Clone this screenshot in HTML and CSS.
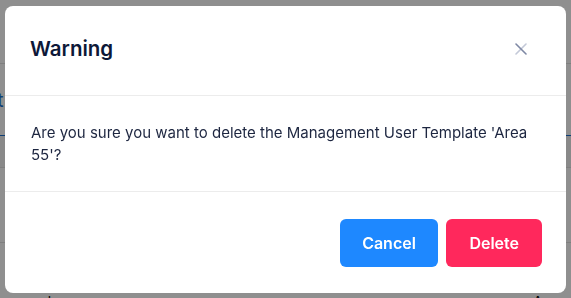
FILE: index.html
```html
<!DOCTYPE html>
<html lang="en">
<head>
<meta charset="utf-8">
<title>Warning</title>
<link rel="stylesheet" href="styles.css">
</head>
<body>
<div class="page">
  <div class="row row-top"></div>
  <div class="row row-link"><span class="link">t</span></div>
  <div class="row row-band"></div>
  <div class="row row-mid"></div>
  <div class="row row-bottom"><span class="peek peek-left">ab</span><span class="peek peek-right">Ac</span></div>
</div>
<div class="overlay">
  <div class="modal" role="dialog">
    <div class="modal-header">
      <h2 class="modal-title">Warning</h2>
      <button class="close" aria-label="Close">
        <svg width="12" height="12" viewBox="0 0 12 12">
          <line x1="1" y1="11" x2="11" y2="1" stroke="#c3c9d8" stroke-width="1.6" stroke-linecap="round"/>
          <line x1="1" y1="1" x2="11" y2="11" stroke="#7e88a4" stroke-width="1.6" stroke-linecap="round"/>
        </svg>
      </button>
    </div>
    <div class="modal-body">
      <p>Are you sure you want to delete the Management User Template 'Area 55'?</p>
    </div>
    <div class="modal-footer">
      <button class="btn btn-cancel">Cancel</button>
      <button class="btn btn-delete">Delete</button>
    </div>
  </div>
</div>
</body>
</html>
```

FILE: styles.css
```css
* { box-sizing: border-box; }
html, body { margin: 0; padding: 0; height: 100%; }
body {
  font-family: Inter, "Noto Sans", sans-serif;
  background: #ffffff;
  overflow: hidden;
}
.page {
  height: 298px;
  display: flex;
  flex-direction: column;
}
.row { border-bottom: 1px solid #e2e2e2; }
.row-top { height: 64px; }
.row-link { height: 72px; border-bottom: 1px solid #1a6fd0; position: relative; }
.link {
  position: absolute;
  left: -3px;
  top: 26px;
  color: #1a6fd0;
  font-size: 20px;
  line-height: 20px;
}
.row-band { height: 32px; background: #f4f4f4; }
.row-mid { height: 75px; }
.row-bottom { flex: 1; position: relative; border-bottom: none; }
.peek {
  position: absolute;
  top: 50px;
  font-size: 14px;
  color: #000;
}
.peek-left { left: 40px; }
.peek-right { left: 533px; }

.overlay {
  position: fixed;
  inset: 0;
  background: rgba(0, 0, 0, 0.44);
  display: flex;
  align-items: center;
  justify-content: center;
}
.modal {
  width: 561px;
  height: 287px;
  margin-top: 1px;
  background: #ffffff;
  border-radius: 8px;
  display: flex;
  flex-direction: column;
}
.modal-header {
  height: 90px;
  padding: 0 39px 0 26px;
  display: flex;
  align-items: center;
  justify-content: space-between;
  border-bottom: 1px solid #ececec;
}
.modal-title {
  margin: 0 0 3px -1px;
  font-size: 20.5px;
  font-weight: 600;
  color: #0d1838;
  line-height: 28px;
}
.close {
  border: 0;
  background: none;
  padding: 0;
  width: 12px;
  height: 12px;
  margin-bottom: 4px;
  display: flex;
}
.modal-body {
  padding: 26px 26px 0 26px;
  height: 96px;
  border-bottom: 1px solid #ececec;
}
.modal-body p {
  margin: 0;
  font-size: 15px;
  line-height: 22px;
  color: #1d2640;
}
.modal-footer {
  flex: 1;
  padding: 0 24px 0 26px;
  display: flex;
  align-items: center;
  justify-content: flex-end;
  gap: 8px;
}
.btn {
  height: 48px;
  border: 0;
  border-radius: 6px;
  padding: 0 22px;
  font-family: Inter, "Noto Sans", sans-serif;
  font-size: 16px;
  font-weight: 600;
  color: #ffffff;
}
.btn-cancel { background: #1e88ff; padding: 0 22.5px; }
.btn-delete { background: #ff285c; padding: 0 23px; }
```
